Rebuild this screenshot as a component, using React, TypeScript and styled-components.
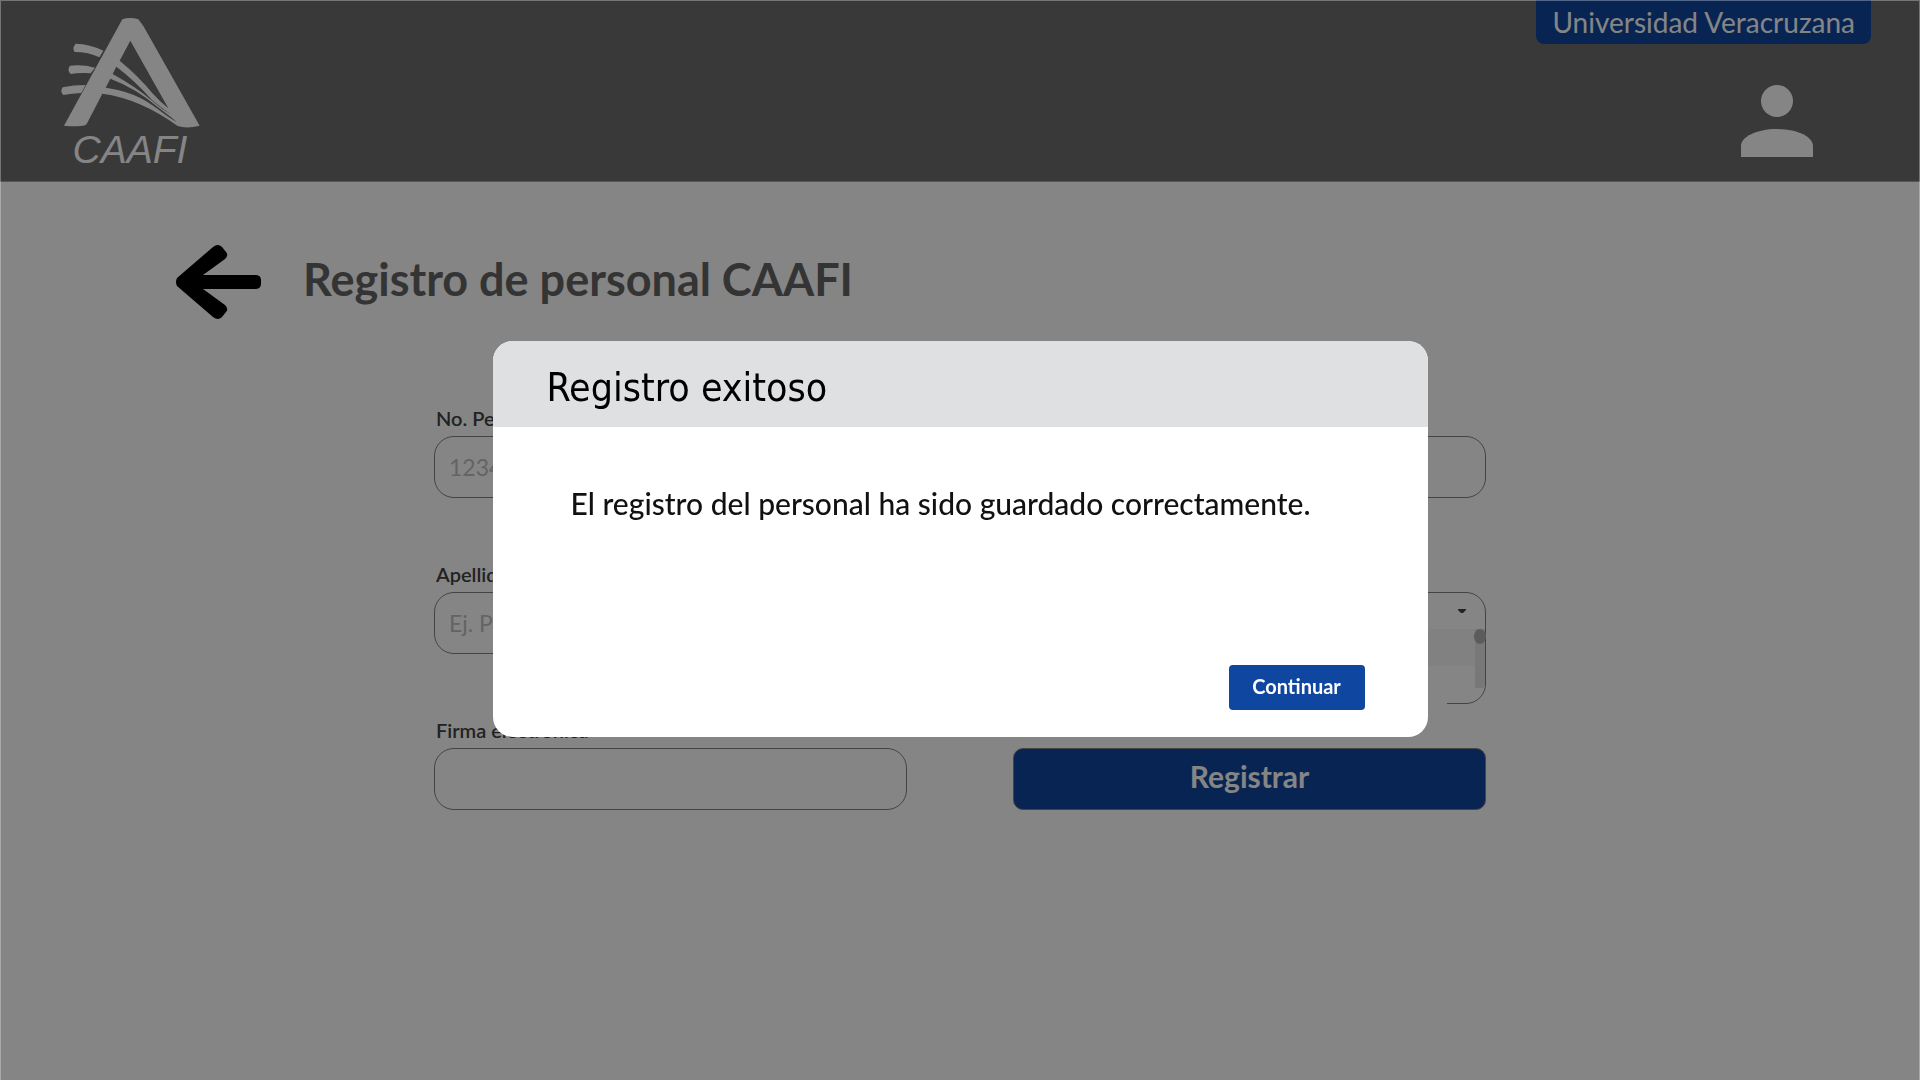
import React, { useState } from 'react';
import styled, { createGlobalStyle } from 'styled-components';

const GlobalStyle = createGlobalStyle`
  *, *::before, *::after { box-sizing: border-box; }
  body {
    margin: 0;
    background: #fff;
    font-family: Lato, 'Open Sans', sans-serif;
  }
`;

const Page = styled.div`
  min-height: 100vh;
`;

const Header = styled.header`
  display: flex;
  justify-content: space-between;
  align-items: flex-start;
  height: 182px;
  padding: 0 49px 0 60px;
  background: #6d6d6d;
  border-bottom: 1px solid #a5a5a5;
`;

const Brand = styled.a`
  display: block;
  margin-top: 16px;
  color: #fff;
`;

const HeaderSide = styled.div`
  display: flex;
  flex-direction: column;
  align-items: flex-end;
  gap: 41px;
`;

const Institution = styled.div`
  padding: 5px 16px 4px;
  border-radius: 0 0 8px 8px;
  background: #0e46a0;
  color: #fff;
  font-size: 28px;
  line-height: 35px;
`;

const IconButton = styled.button`
  display: block;
  padding: 0;
  border: 0;
  background: none;
  color: ${(p) => p.color};
  cursor: pointer;
  svg { display: block; }
`;

const Account = styled.div`
  padding-right: 58px;
`;

const TitleRow = styled.div`
  display: flex;
  align-items: flex-start;
  gap: 41px;
  padding: 62px 176px 0;
`;

const Title = styled.h1`
  margin: 0;
  color: #646464;
  font-size: 45px;
  line-height: 70px;
  font-weight: 700;
`;

const Form = styled.form`
  display: grid;
  grid-template-columns: 1fr 1fr;
  gap: 60px 106px;
  max-width: 1052px;
  margin: 82px auto 0;
`;

const Field = styled.div`
  display: flex;
  flex-direction: column;
  height: 96px;
`;

const Label = styled.label`
  flex: none;
  height: 34px;
  padding: 3px 2px 0;
  color: #424242;
  font-size: 20px;
  line-height: 26px;
  font-weight: 600;
  white-space: nowrap;
`;

const Input = styled.input`
  height: 62px;
  padding: 0 14px;
  border: 1px solid #828282;
  border-radius: 20px;
  background: transparent;
  color: #424242;
  font: inherit;
  font-size: 23px;
  &::placeholder { color: #c0c0c0; opacity: 1; }
`;

const Picker = styled.div`
  flex: none;
  display: flex;
  flex-direction: column;
  height: 112px;
  border: 1px solid #828282;
  border-radius: 20px;
`;

const PickerHead = styled.div`
  display: flex;
  align-items: center;
  flex: none;
  height: 36px;
  padding-right: 19px;
`;

const Select = styled.select`
  flex: 1;
  padding: 0 14px;
  border: 0;
  background: transparent;
  appearance: none;
  font: inherit;
  font-size: 20px;
`;

const PickerBody = styled.div`
  display: flex;
  flex: 1;
  align-items: flex-start;
`;

const Options = styled.div`
  flex: 1;
`;

const Option = styled.div<{ $active?: boolean }>`
  height: ${(p) => (p.$active ? 37 : 38)}px;
  margin-right: ${(p) => (p.$active ? 0 : 28)}px;
  background: ${(p) => (p.$active ? '#f8f8f8' : '#fff')};
`;

const Track = styled.div`
  display: flex;
  justify-content: center;
  width: 10px;
  height: 59px;
  background: #e6e6e6;
`;

const Thumb = styled.div`
  flex: none;
  width: 12px;
  height: 15px;
  border-radius: 50%;
  background: #b0b0b0;
`;

const Submit = styled.button`
  align-self: end;
  height: 62px;
  padding: 0 16px 6px;
  border: 1px solid #828282;
  border-radius: 10px;
  background: #0e46a0;
  color: #fff;
  font: inherit;
  font-size: 30px;
  font-weight: 700;
`;

const Overlay = styled.div`
  position: fixed;
  inset: 0;
  display: flex;
  align-items: center;
  justify-content: center;
  padding-bottom: 3px;
  border: 1px solid rgba(255, 255, 255, 0.3);
  border-bottom: 0;
  background: rgba(0, 0, 0, 0.478);
`;

const Dialog = styled.section`
  display: flex;
  flex-direction: column;
  width: min(935px, 92vw);
  min-height: 396px;
  border-radius: 20px;
  background: #fff;
  overflow: hidden;
`;

const DialogTitle = styled.h2`
  margin: 0;
  padding: 24px 54px 16px;
  background: #dfe0e2;
  color: #000;
  font-family: 'DejaVu Sans Condensed', 'DejaVu Sans', sans-serif;
  font-size: 39px;
  line-height: 46px;
  font-weight: 400;
`;

const Message = styled.p`
  flex: 1;
  margin: 0;
  padding: 56px 78px 0;
  color: #111;
  font-size: 30px;
  line-height: 40px;
  font-weight: 500;
`;

const Actions = styled.div`
  display: flex;
  justify-content: flex-end;
  padding: 0 63px 27px;
`;

const Continue = styled.button`
  width: 136px;
  height: 45px;
  padding: 0 0 3px;
  border: 0;
  border-radius: 4px;
  background: #0e46a0;
  color: #fff;
  font: inherit;
  font-size: 20px;
  font-weight: 700;
`;

const LogoDrawing = styled.svg`
  display: block;
  fill: currentColor;
`;

const Logo = () => (
  <LogoDrawing width="142" height="160" viewBox="60 48 426 480" role="img" aria-label="CAAFI">
    <path
      fillRule="evenodd"
      d="M247 58Q270 50 295 58Q312 78 325 104L479 377Q440 387 413 378Q300 296 187 281L142 368Q138 377 128 377Q100 381 72 377Z
         M271 122L239 182Q295 228 336 278Q360 305 385 325Z
         M229 200L218 222Q290 262 336 302Q365 327 395 345Q362 322 335 299Q285 242 229 200Z
         M211 236L197 263Q285 274 350 325Q380 349 408 365Q398 355 350 319Q290 266 211 236Z"
    />
    <path d="M107 131Q150 132 190 152L178 172Q145 156 104 156Q95 145 107 131Z" />
    <path d="M90 197Q130 193 165 203L152 220Q120 217 92 222Q80 210 90 197Z" />
    <path d="M68 262Q100 255 137 255L124 279Q95 280 70 285Q59 275 68 262Z" />
    <text x="270" y="488" textAnchor="middle" fontFamily="'Liberation Sans', Arial, sans-serif" fontStyle="italic" fontSize="117">CAAFI</text>
  </LogoDrawing>
);

const UserIcon = () => (
  <svg width="72" height="72" viewBox="0 0 72 72" fill="currentColor" aria-hidden="true">
    <circle cx="36" cy="16" r="16" />
    <path d="M0 72V61C0 52 15 44 36 44S72 52 72 61V72Z" />
  </svg>
);

const BackIcon = () => (
  <svg width="86" height="76" viewBox="0 0 86 76" aria-hidden="true">
    <path d="M1 34L37 3Q42 -1 46 3L50 8Q53 11 49 15L27 31H79Q85 31 85 36V40Q85 45 79 45H27L49 61Q53 65 50 68L46 73Q42 77 37 73L1 42Q-1 38 1 34Z" />
  </svg>
);

export default function App() {
  const [open, setOpen] = useState(true);
  return (
    <>
      <GlobalStyle />
      <Page>
        <Header>
          <Brand href="#"><Logo /></Brand>
          <HeaderSide>
            <Institution>Universidad Veracruzana</Institution>
            <Account><IconButton color="#fff" type="button" aria-label="Cuenta"><UserIcon /></IconButton></Account>
          </HeaderSide>
        </Header>
        <main>
          <TitleRow>
            <IconButton color="#000" type="button" aria-label="Volver"><BackIcon /></IconButton>
            <Title>Registro de personal CAAFI</Title>
          </TitleRow>
          <Form onSubmit={(e) => e.preventDefault()}>
            <Field>
              <Label htmlFor="numero">No. Personal</Label>
              <Input id="numero" placeholder="12345" />
            </Field>
            <Field>
              <Label htmlFor="nombre">Nombre</Label>
              <Input id="nombre" />
            </Field>
            <Field>
              <Label htmlFor="apellidos">Apellidos</Label>
              <Input id="apellidos" placeholder="Ej. Pérez" />
            </Field>
            <Field>
              <Label htmlFor="puesto">Puesto</Label>
              <Picker>
                <PickerHead>
                  <Select id="puesto" />
                  <svg width="8" height="5" viewBox="0 0 8 5" aria-hidden="true"><path d="M0 0H8V1L5 4H3L0 1Z" fill="#424242" /></svg>
                </PickerHead>
                <PickerBody>
                  <Options><Option $active /><Option /></Options>
                  <Track><Thumb /></Track>
                </PickerBody>
              </Picker>
            </Field>
            <Field>
              <Label htmlFor="firma">Firma electrónica</Label>
              <Input id="firma" />
            </Field>
            <Submit type="submit">Registrar</Submit>
          </Form>
        </main>
      </Page>
      {open && (
        <Overlay>
          <Dialog role="dialog" aria-modal="true" aria-labelledby="dialog-title">
            <DialogTitle id="dialog-title">Registro exitoso</DialogTitle>
            <Message>El registro del personal ha sido guardado correctamente.</Message>
            <Actions><Continue type="button" onClick={() => setOpen(false)}>Continuar</Continue></Actions>
          </Dialog>
        </Overlay>
      )}
    </>
  );
}
